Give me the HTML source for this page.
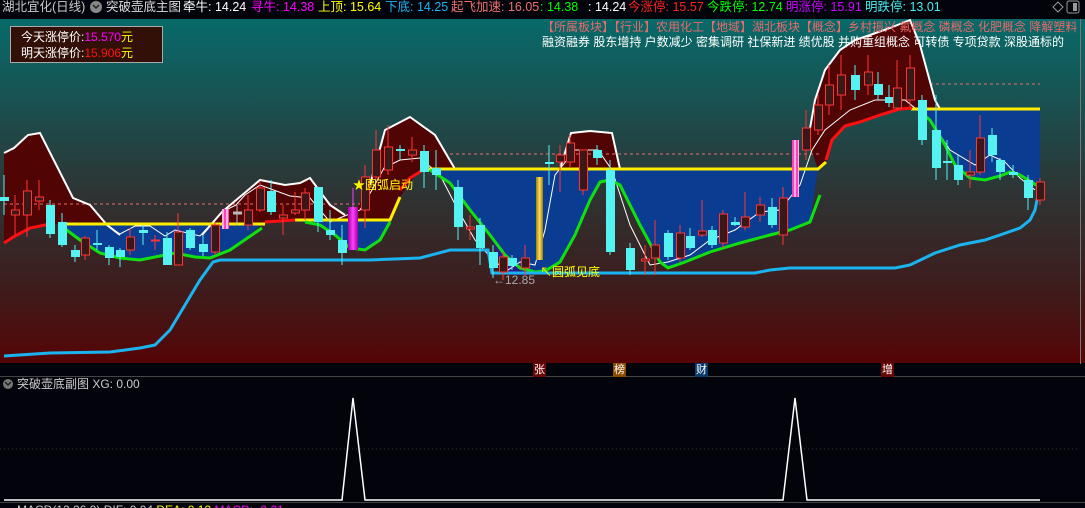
<!DOCTYPE html>
<html><head><meta charset="utf-8"><style>
*{margin:0;padding:0}
html,body{width:1085px;height:508px;overflow:hidden}
body{background:#03040b;font-family:"Liberation Sans","Noto Sans CJK SC",sans-serif;position:relative}
.t{position:absolute;white-space:nowrap;font-size:12px;line-height:14px}
.h{position:absolute;white-space:nowrap;font-size:12.5px;line-height:14px;top:0}
</style></head><body>
<svg width="1085" height="508" style="position:absolute;left:0;top:0">
<defs>
<linearGradient id="bg" x1="0" y1="0" x2="0" y2="1">
<stop offset="0" stop-color="#086a6a"/><stop offset="0.25" stop-color="#1a5050"/>
<stop offset="0.5" stop-color="#2e3434"/><stop offset="0.78" stop-color="#3e1c1c"/><stop offset="0.9" stop-color="#4a1010"/><stop offset="1" stop-color="#560404"/>
</linearGradient>
<pattern id="st" width="4" height="4" patternUnits="userSpaceOnUse"><rect width="2" height="4" fill="#ff40c0"/><rect x="2" width="2" height="4" fill="#ffb0e0"/></pattern>
<linearGradient id="gold" x1="0" x2="1"><stop offset="0" stop-color="#a08000"/><stop offset="0.5" stop-color="#ffe060"/><stop offset="1" stop-color="#a08000"/></linearGradient>
<linearGradient id="mag" x1="0" x2="1"><stop offset="0" stop-color="#a000a0"/><stop offset="0.5" stop-color="#ff40ff"/><stop offset="1" stop-color="#a000a0"/></linearGradient>
</defs>
<rect x="0" y="19" width="1085" height="344" fill="url(#bg)"/>
<g fill="#500404">
<polygon points="4,153 14,148 28,135 40,133 73,198 90,205 107,225 60,224 50,224 30,228 15,236 4,243"/>
<polygon points="202,235 222,212 260,180 285,185 300,183 310,178 330,205 345,215 358,207 370,185 385,130 410,117 435,135 455,169 420,169 400,197 390,220 265,222 262,224 230,224"/>
<polygon points="571,133 590,131 612,133 620,169 560,169"/>
<polygon points="808,140 815,100 825,70 840,50 855,40 870,35 890,28 910,20 920,45 935,100 940,109 910,108 880,115 860,122 845,125 830,140 826,162 818,169"/>
</g>
<g fill="#0a3c92">
<polygon points="60,224 262,224 230,250 210,258 195,257 175,253 165,255 140,260 120,258 100,253 80,240"/>
<polygon points="300,222 390,220 380,240 365,250 350,248 335,235 320,225"/>
<polygon points="430,169 818,169 810,222 790,230 770,235 740,243 710,252 685,262 668,268 660,262 640,225 630,205 620,185 610,180 600,182 590,200 575,235 560,262 545,271 535,272 520,268 505,255 490,235 470,210 450,183"/>
<polygon points="911,109 1040,109 1040,198 1035,185 1020,175 1010,172 1000,176 985,180 970,178 955,165 945,145 930,120 920,112"/>
</g>
<polygon points="490,235 505,255 520,268 530,275 510,275 500,262" fill="#2a1a8a"/>
<g stroke="#e07070" stroke-dasharray="3,3" stroke-width="1">
<line x1="4" y1="204" x2="360" y2="204"/><line x1="450" y1="154" x2="820" y2="154"/><line x1="930" y1="84" x2="1040" y2="84"/>
</g>
<g fill="none" stroke="#fff" stroke-width="2">
<polyline points="4,153 14,148 28,135 40,133 73,198 90,205 107,225 120,235"/>
<polyline points="202,235 222,212 260,180 285,185 300,183 310,178 330,205 345,215"/>
<polyline points="370,185 385,130 410,117 435,135 455,169"/>
<polyline points="560,169 571,133 590,131 612,133 620,169"/>
<polyline points="808,140 815,100 825,70 840,50 855,40 870,35 890,28 910,20 920,45 935,100 940,109"/>
</g>
<polyline fill="none" stroke="#fff" stroke-width="1" points="107,225 120,234 135,226 150,226 165,236 175,230 200,236 222,212 236,205 245,195 260,185 290,196 310,198 330,222 342,217 360,210 372,190 384,168 400,160 420,158 440,175 458,210 475,240 495,262 508,270 520,262 535,265 545,230 555,175 575,150 598,150 612,170 630,225 650,265 668,262 690,255 710,240 735,230 760,212 780,210 800,185 812,150 825,130 850,110 875,100 905,100 930,120 950,150 975,165 990,155 1005,162 1020,178 1035,190"/>
<g fill="none" stroke="#ffee00" stroke-width="3">
<polyline points="60,224 265,224"/><polyline points="295,220 390,220 400,197"/><polyline points="423,169 818,169 826,162"/><polyline points="911,109 1040,109"/>
</g>
<g fill="none" stroke="#ff1010" stroke-width="3">
<polyline points="4,243 15,236 30,228 45,225 52,224"/><polyline points="265,222 295,220"/><polyline points="400,190 410,178 423,170"/>
<polyline points="826,160 832,140 845,126 860,122 880,115 900,109 912,108"/>
</g>
<g fill="none" stroke="#10e010" stroke-width="3">
<polyline points="60,225 80,240 100,253 120,258 140,260 165,255 175,253 195,257 210,258 230,250 262,228"/>
<polyline points="305,222 320,225 335,235 350,248 365,250 380,240 390,222"/>
<polyline points="430,170 450,183 470,210 490,235 505,255 520,268 535,272 545,271 560,262 575,235 590,200 600,182 610,180 620,185 630,205 640,225 660,262 668,268 685,262 710,252 740,243 770,235 790,230 810,222 820,195"/>
<polyline points="920,112 930,120 945,145 955,165 970,178 985,180 1000,176 1010,172 1020,175 1038,186"/>
</g>
<polyline fill="none" stroke="#1ab4f0" stroke-width="3" points="4,356 50,353 110,352 140,348 155,345 170,330 185,305 200,280 213,262 220,260 370,260 420,258 450,250 488,250 492,273 755,273 770,270 790,268 895,268 910,265 935,253 960,245 985,240 1000,235 1020,228 1030,220 1035,210 1038,195"/>
<g id="c"></g>
<rect x="348" y="207" width="10" height="43" fill="url(#mag)"/>
<line x1="353" y1="188" x2="353" y2="207" stroke="#ff40ff"/>
<rect x="222" y="209" width="7" height="20" fill="url(#st)"/>
<rect x="792" y="140" width="7" height="57" fill="url(#st)"/>
<rect x="536" y="177" width="7" height="83" fill="url(#gold)"/>
<line x1="0" y1="376.5" x2="1085" y2="376.5" stroke="#444"/>
<line x1="0" y1="502.5" x2="1085" y2="502.5" stroke="#444"/>
<line x1="0" y1="449" x2="1080" y2="449" stroke="#333" stroke-dasharray="1,3"/>
<polyline fill="none" stroke="#fff" stroke-width="1.5" points="4,500 342,500 353,398 365,500 783,500 795,398 807,500 1040,500"/>
<g fill="#777"><rect x="1080" y="19" width="1" height="345"/></g>
<circle cx="8" cy="384" r="5" fill="#777"/><circle cx="96" cy="7" r="6" fill="#888"/>
<path d="M5 382 l3 3 3-3" stroke="#222" fill="none" stroke-width="1.5"/><path d="M93 5 l3 3 3-3" stroke="#222" fill="none" stroke-width="1.5"/>
<path d="M1058 2 l5 5 -5 5 -5 -5z" fill="none" stroke="#999"/>
<rect x="1067" y="1" width="12" height="12" rx="2" fill="none" stroke="#999"/><rect x="1073" y="3" width="4" height="8" fill="#999"/>
</svg>
<script>
var C=[[4,'c',197,201,175,215],[15,'r',210,215,195,235],[27,'r',191,215,180,237],[39,'r',197,201,180,210],[50,'c',205,234,200,238],[62,'c',222,245,213,247],[75,'c',250,257,245,262],[85,'r',238,255,236,260],[97,'c',243,245,230,250],[109,'c',247,258,245,265],[120,'c',250,257,248,267],[130,'r',237,250,228,255],[143,'c',230,233,225,245],[155,'r',240,241,235,250],[167,'c',238,265,232,265],[178,'r',232,265,213,265],[190,'c',230,248,228,250],[203,'c',244,252,235,256],[215,'r',225,252,222,255],[237,'g',212,214,205,225],[248,'r',210,225,195,230],[260,'r',188,210,182,212],[271,'c',191,212,180,215],[283,'r',215,218,205,235],[295,'r',210,213,192,215],[305,'r',193,210,188,220],[318,'c',187,222,187,232],[330,'c',230,235,210,240],[342,'c',240,253,225,265],[365,'r',177,210,165,228],[376,'r',150,177,130,180],[388,'r',147,170,125,175],[400,'c',149,151,145,160],[412,'r',150,155,137,162],[424,'c',151,172,145,188],[436,'c',168,175,150,190],[458,'c',187,227,180,240],[470,'r',227,229,215,240],[480,'c',225,248,218,265],[493,'c',252,268,245,278],[503,'r',257,272,252,280],[512,'c',258,266,255,270],[525,'r',258,268,245,275],[549,'c',162,164,145,185],[560,'r',155,162,145,192],[570,'r',143,162,135,168],[583,'r',150,190,150,195],[597,'c',150,158,145,165],[610,'c',170,252,160,255],[630,'c',248,270,243,275],[645,'r',259,261,245,275],[655,'r',245,258,220,275],[668,'c',233,257,230,260],[680,'r',233,258,225,262],[690,'c',236,248,228,250],[702,'r',231,235,200,237],[712,'c',230,245,226,248],[723,'r',214,243,210,248],[735,'c',222,225,217,226],[745,'r',217,227,192,230],[760,'r',205,215,197,222],[772,'c',207,225,198,228],[783,'r',198,235,187,245],[806,'r',128,150,110,160],[818,'r',105,130,95,135],[829,'r',85,105,65,115],[841,'r',75,95,55,110],[855,'c',75,90,65,100],[868,'r',72,85,55,95],[878,'c',84,95,72,100],[889,'c',97,103,85,107],[897,'r',88,108,60,110],[910,'r',68,100,55,108],[922,'c',100,140,95,145],[936,'c',130,168,95,180],[947,'c',161,163,140,180],[958,'c',165,180,155,185],[970,'r',172,175,150,188],[980,'r',138,172,115,175],[992,'c',135,155,128,162],[1000,'c',160,172,158,180],[1013,'c',172,175,165,178],[1028,'c',180,198,175,210],[1040,'r',182,200,178,205]];
var s='';C.forEach(function(k){var x=k[0],col=k[1]=='c'?'#55f2f2':k[1]=='g'?'#bbb':'#ff3434';
s+='<line x1="'+x+'" y1="'+k[4]+'" x2="'+x+'" y2="'+k[5]+'" stroke="'+col+'" stroke-width="1"/>';
if(k[1]=='c')s+='<rect x="'+(x-4)+'" y="'+k[2]+'" width="9" height="'+Math.max(2,k[3]-k[2])+'" fill="'+col+'"/>';
else s+='<rect x="'+(x-3.5)+'" y="'+k[2]+'" width="8" height="'+Math.max(1,k[3]-k[2])+'" fill="'+(k[1]=='g'?col:'#3a1818')+'" stroke="'+col+'"/>';});
document.getElementById('c').innerHTML=s;
</script>
<div class="h" style="left:2px;color:#ccc">湖北宜化(日线)</div>
<div class="h" style="left:106px;color:#ddd">突破壶底主图</div>
<div class="h" style="left:183px;color:#fff">牵牛: 14.24</div>
<div class="h" style="left:251px;color:#f0f">寻牛: 14.38</div>
<div class="h" style="left:318px;color:#ff0">上顶: 15.64</div>
<div class="h" style="left:385px;color:#1ab4f0">下底: 14.25</div>
<div class="h" style="left:451px;color:#f07070">起飞加速: 16.05</div>
<div class="h" style="left:540px;color:#0f0">: 14.38</div>
<div class="h" style="left:588px;color:#fff">: 14.24</div>
<div class="h" style="left:628px;color:#f22">今涨停: 15.57</div>
<div class="h" style="left:707px;color:#0f0">今跌停: 12.74</div>
<div class="h" style="left:786px;color:#c0f">明涨停: 15.91</div>
<div class="h" style="left:865px;color:#4ee">明跌停: 13.01</div>
<div style="position:absolute;left:10px;top:26px;width:151px;height:35px;background:#321008;border:1px solid #aaa"></div>
<div class="t" style="left:21px;top:30px;color:#fff">今天涨停价:<span style="color:#f0f">15.570</span><span style="color:#ff0">元</span></div>
<div class="t" style="left:21px;top:46px;color:#fff">明天涨停价:<span style="color:#f11">15.906</span><span style="color:#ff0">元</span></div>
<div class="t" style="left:542px;top:20px;color:#e86a6a">【所属板块】【行业】农用化工【地域】湖北板块【概念】乡村振兴 氟概念 磷概念 化肥概念 降解塑料</div>
<div class="t" style="left:542px;top:35px;color:#fff">融资融券 股东增持 户数减少 密集调研 社保新进 绩优股 并购重组概念 可转债 专项贷款 深股通标的</div>
<div class="t" style="left:353px;top:178px;color:#ff0">★圆弧启动</div>
<div class="t" style="left:540px;top:265px;color:#ff0">↖圆弧见底</div>
<div class="t" style="left:493px;top:273px;color:#aaa">←12.85</div>
<div class="t" style="left:533px;top:363px;font-size:11px;color:#fff;background:#6a0808;padding:0 1px">张</div>
<div class="t" style="left:613px;top:363px;font-size:11px;color:#fff;background:#8a4a00;padding:0 1px">榜</div>
<div class="t" style="left:695px;top:363px;font-size:11px;color:#fff;background:#0a3a6a;padding:0 1px">财</div>
<div class="t" style="left:881px;top:363px;font-size:11px;color:#fff;background:#6a0808;padding:0 1px">增</div>
<div class="t" style="left:17px;top:377px;color:#ccc">突破壶底副图 XG: 0.00</div>
<div class="t" style="left:17px;top:503px;color:#ccc">MACD(12,26,9) DIF: 0.04 <span style="color:#ff0">DEA: 0.12</span> <span style="color:#f0f">MACD: -0.21</span></div>
</body></html>
